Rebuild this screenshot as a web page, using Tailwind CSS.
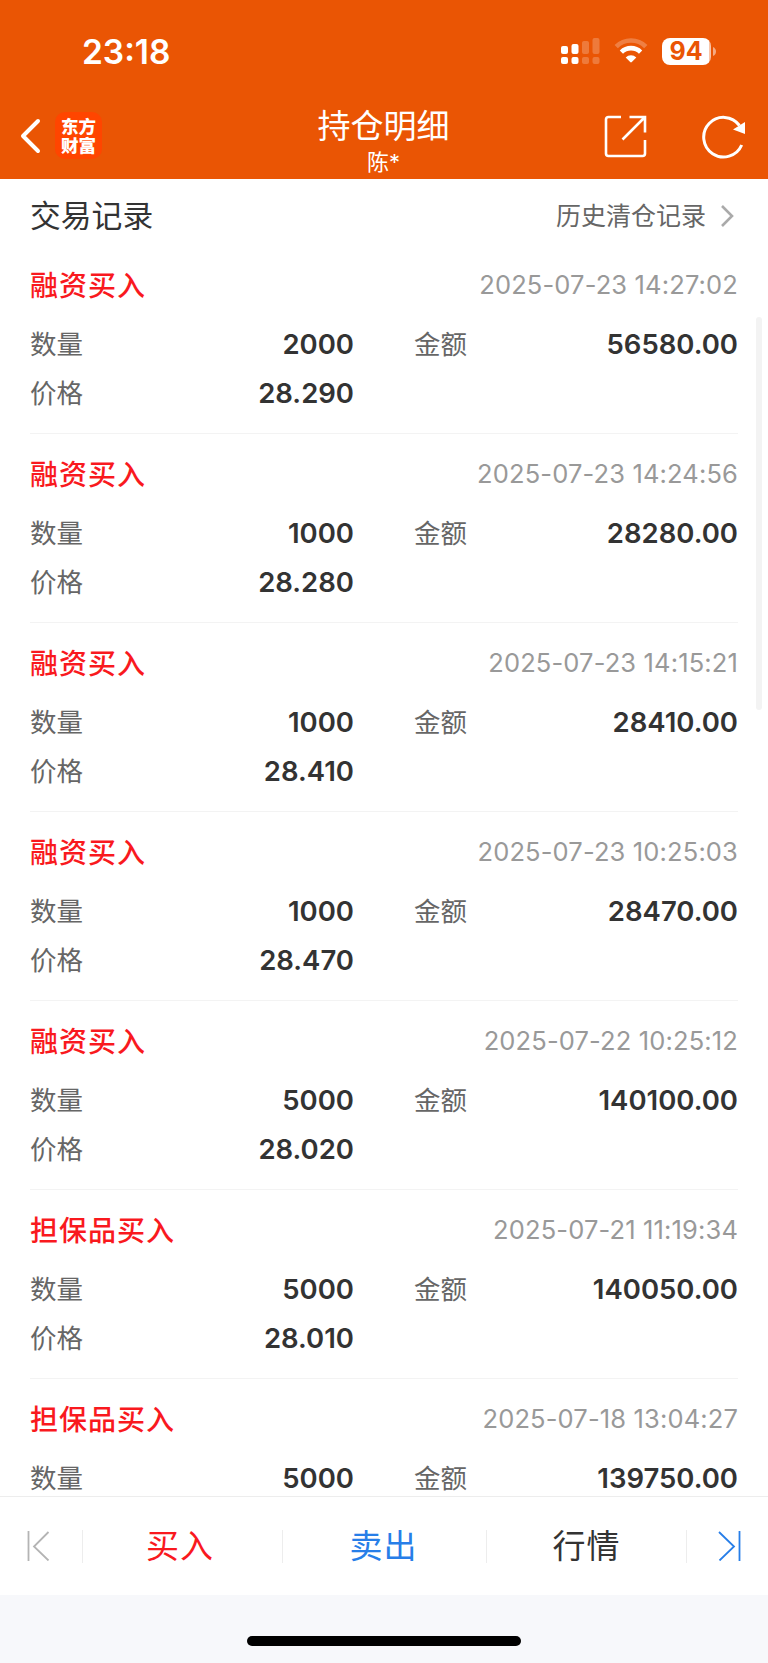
<!DOCTYPE html>
<html lang="zh-CN">
<head>
    <meta charset="UTF-8">
    <meta name="viewport" content="width=device-width, initial-scale=1.0">
    <title>持仓明细</title>
    <script src="https://cdn.jsdelivr.net/npm/@tailwindcss/browser@4"></script>
    <style>
        body {
            font-family: Inter, 'Noto Sans CJK SC', sans-serif;
        }
    </style>
</head>
<body class="bg-white">
    <div class="relative flex h-[1663px] w-[768px] flex-col overflow-hidden bg-white">
        <header class="h-[179px] shrink-0 bg-[#ea5504] text-white">
            <!-- Status bar -->
            <div class="flex h-[102px] items-center justify-between pl-[82px] pr-[52px]">
                <span class="pt-[3px] text-[33.5px] font-semibold leading-none">23:18</span>
                <div class="flex items-center">
                    <svg class="mr-[14px]" width="39" height="28" viewBox="0 0 39 28" fill="#fff">
                        <rect x="0" y="9" width="7" height="8" rx="2"/>
                        <rect x="0" y="20" width="7" height="7" rx="2"/>
                        <rect x="10.5" y="7" width="7" height="10" rx="2"/>
                        <rect x="10.5" y="20" width="7" height="7" rx="2"/>
                        <g opacity=".22">
                            <rect x="21" y="4" width="7" height="13" rx="2"/>
                            <rect x="21" y="20" width="7" height="7" rx="2"/>
                            <rect x="31.5" y="1" width="7" height="16" rx="2"/>
                            <rect x="31.5" y="20" width="7" height="7" rx="2"/>
                        </g>
                    </svg>
                    <svg class="mr-[14px]" width="34" height="28" viewBox="0 0 34 28" fill="none">
                        <path d="M2.2 9.6A21 21 0 0 1 31.8 9.6" stroke="#fff" stroke-opacity=".25" stroke-width="4.6"/>
                        <path d="M7.4 15.1A13.6 13.6 0 0 1 26.6 15.1" stroke="#fff" stroke-width="4.6"/>
                        <path d="M11.7 20.4A7.6 7.6 0 0 1 22.3 20.4L17.8 25.1Q17 25.9 16.2 25.1Z" fill="#fff"/>
                    </svg>
                    <div class="flex h-[27px] w-[49px] items-center justify-center rounded-[8px] bg-[linear-gradient(90deg,#fff_47px,#f8c5a9_47px)] pr-px pt-px text-[25px] font-bold leading-none text-[#ea5504]">94</div>
                    <svg class="ml-[2px]" width="3" height="9" viewBox="0 0 3 9"><path d="M0 0Q3 1.5 3 4.5T0 9Z" fill="#fff" fill-opacity=".5"/></svg>
                </div>
            </div>
            <!-- Title bar -->
            <div class="grid h-[77px] grid-cols-[1fr_auto_1fr]">
                <div class="flex items-start gap-[14px] pl-[20px] pt-[10px]">
                    <svg class="mt-[5px]" width="21" height="38" viewBox="0 0 21 38" fill="none" stroke="#fff" stroke-width="4" stroke-linecap="round" stroke-linejoin="round">
                        <path d="M18 4L3 19L18 34"/>
                    </svg>
                    <div class="flex h-[47px] w-[47px] flex-col items-center justify-center rounded-[10px] bg-[#ff4500] text-[17.5px] font-black leading-[19px]">
                        <span>东方</span>
                        <span>财富</span>
                    </div>
                </div>
                <div class="flex flex-col items-center pr-px pt-[6px]">
                    <h1 class="text-[33px] leading-[36px]">持仓明细</h1>
                    <span class="text-[22px] leading-[36px]">陈*</span>
                </div>
                <div class="flex justify-end gap-[55px] pr-[20px] pt-[12px]">
                    <svg width="44" height="44" viewBox="0 0 44 44" fill="none" stroke="#fff" stroke-width="2.6">
                        <path d="M18 3H5.5Q3 3 3 5.5V39.5Q3 42 5.5 42H39.5Q42 42 42 39.5V26M26.5 3H42V18.5M41.5 3.5L19.5 25.5"/>
                    </svg>
                    <svg width="46" height="46" viewBox="0 0 46 46" fill="none">
                        <path d="M39.7 31A19.8 19.8 0 1 1 37.5 11.5" stroke="#fff" stroke-width="3"/>
                        <path d="M43 8V20L31 15.5Z" fill="#fff"/>
                    </svg>
                </div>
            </div>
        </header>

        <div class="flex h-[66px] shrink-0 items-center justify-between pl-[30px] pr-[34px] pt-[8px]">
            <h2 class="pt-px text-[30.8px] leading-none text-[#333]">交易记录</h2>
            <a class="flex items-center gap-[14px] text-[25px] leading-none text-[#666]">
                历史清仓记录
                <svg width="14" height="24" viewBox="0 0 14 24" fill="none" stroke="#aaa" stroke-width="2.6"><path d="M2 2L12 12L2 22"/></svg>
            </a>
        </div>

        <main id="records" class="min-h-0 flex-1 overflow-hidden px-[30px]"></main>

        <nav class="flex h-[99px] shrink-0 items-center border-t border-[#ededed] bg-white text-[33px] leading-none tracking-[1px]">
            <button class="flex h-[33px] w-[83px] items-center border-r border-[#ededed] pl-[27px]">
                <svg width="23" height="30" viewBox="0 0 23 30" fill="none" stroke="#b4b4b4" stroke-width="1.8"><path d="M1.5 0V30M21.5 1L7 15.5L21.5 29.5"/></svg>
            </button>
            <button class="flex h-[33px] w-[200px] items-center justify-center border-r border-[#ededed] pr-[5px] text-[#f9191e]">买入</button>
            <button class="flex h-[33px] w-[204px] items-center justify-center border-r border-[#ededed] pr-[2px] text-[#277ee8]">卖出</button>
            <button class="flex h-[33px] w-[200px] items-center justify-center border-r border-[#ededed] text-[#333]">行情</button>
            <button class="flex h-[33px] flex-1 items-center pl-[31px]">
                <svg width="23" height="30" viewBox="0 0 23 30" fill="none" stroke="#277ee8" stroke-width="1.8"><path d="M21.5 0V30M1 1L16 15.5L1.5 29.5"/></svg>
            </button>
        </nav>
        <footer class="flex h-[68px] shrink-0 justify-center bg-[#f7f8fb] pt-[41px]">
            <div class="h-[10px] w-[274px] rounded-full bg-black"></div>
        </footer>

        <!-- Scrollbar thumb -->
        <div class="absolute right-[6px] top-[317px] h-[393px] w-[6px] rounded-full bg-[#f3f3f3]"></div>
    </div>

    <script>
        const records = [
            ['融资买入', '2025-07-23 14:27:02', '2000', '56580.00', '28.290'],
            ['融资买入', '2025-07-23 14:24:56', '1000', '28280.00', '28.280'],
            ['融资买入', '2025-07-23 14:15:21', '1000', '28410.00', '28.410'],
            ['融资买入', '2025-07-23 10:25:03', '1000', '28470.00', '28.470'],
            ['融资买入', '2025-07-22 10:25:12', '5000', '140100.00', '28.020'],
            ['担保品买入', '2025-07-21 11:19:34', '5000', '140050.00', '28.010'],
            ['担保品买入', '2025-07-18 13:04:27', '5000', '139750.00']
        ];

        const cell = (label, value) => `
            <div class="flex h-[49px] items-center justify-between">
                <span>${label}</span>
                <span class="text-[27.5px] font-semibold text-[#333]">${value}</span>
            </div>`;

        document.getElementById('records').innerHTML = records.map(([type, time, count, amount, price]) => `
            <section class="h-[189px] border-b border-[#f3f3f3] pt-[20px]">
                <div class="flex h-[40px] items-center justify-between">
                    <h3 class="pt-px text-[28px] font-medium leading-none tracking-[1px] text-[#f9191e]">${type}</h3>
                    <time class="text-[25.5px] leading-none tracking-[0.14px] text-[#999]">${time}</time>
                </div>
                <div class="grid grid-cols-[324px_1fr] gap-x-[60px] pt-[15px] text-[26.5px] leading-[49px] text-[#666]">
                    ${cell('数量', count)}
                    ${cell('金额', amount)}
                    ${price ? cell('价格', price) : ''}
                </div>
            </section>
        `).join('');
    </script>
</body>
</html>
